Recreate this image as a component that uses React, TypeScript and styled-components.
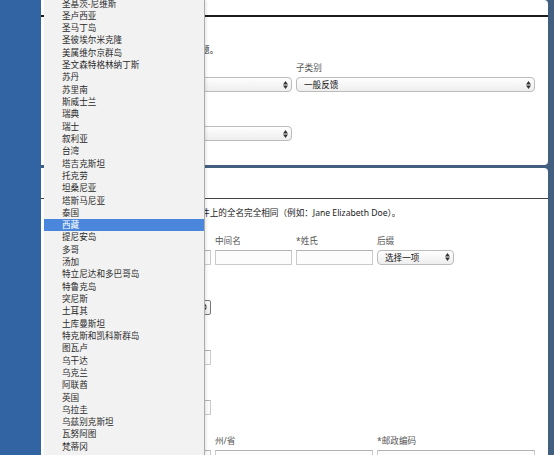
import React from 'react';
import styled, { createGlobalStyle } from 'styled-components';

const GlobalStyle = createGlobalStyle`
  html, body {
    margin: 0;
    padding: 0;
  }
  body {
    font-family: "Noto Sans", "Noto Sans CJK SC", sans-serif;
    font-size: 8.6px;
    color: #222;
    background: #435f80;
  }
`;

// Page frame
const Page = styled.div`
  position: relative;
  display: flex;
  width: 554px;
  height: 455px;
  overflow: hidden;
  background: #435f80;
`;

const Sidebar = styled.div`
  width: 41px;
  flex-shrink: 0;
  background: #3263a3;
`;

const Main = styled.div`
  flex: 1;
  display: flex;
  flex-direction: column;
  gap: 3px;
  padding-right: 6px;
`;

const Panel = styled.section`
  flex-shrink: 0;
  background: #fff;
  border-radius: 0 4px 4px 0;
`;

const PanelHeader = styled.header<{ $height: number; $rule: string }>`
  height: ${({ $height }) => $height}px;
  box-sizing: border-box;
  border-bottom: ${({ $rule }) => $rule};
`;

const PanelBody = styled.div<{ $top: number; $bottom: number }>`
  padding: ${({ $top }) => $top}px 11px ${({ $bottom }) => $bottom}px 12px;
`;

const Intro = styled.p<{ $gap: number }>`
  margin: 0 0 ${({ $gap }) => $gap}px;
  padding-left: 2px;
  line-height: 12.3px;
  white-space: nowrap;
`;

// Form
const FormRows = styled.div<{ $gap: number }>`
  display: flex;
  flex-direction: column;
  gap: ${({ $gap }) => $gap}px;
`;

const FormRow = styled.div`
  display: grid;
  grid-template-columns: repeat(6, 77px);
  column-gap: 4px;
`;

const Field = styled.div<{ $span: number }>`
  grid-column: span ${({ $span }) => $span};
  display: flex;
  flex-direction: column;
`;

const Label = styled.label`
  height: 12px;
  line-height: 12px;
  margin-bottom: 3px;
  color: #555;
  white-space: nowrap;
`;

const TextInput = styled.div`
  height: 15px;
  box-sizing: border-box;
  border: 1px solid #cacaca;
  border-top-color: #b3b3b3;
  background: #fcfcfc;
`;

const SelectBox = styled.div<{ $focused?: boolean }>`
  height: 15px;
  box-sizing: border-box;
  display: flex;
  align-items: center;
  padding: 0 3px 0 7px;
  border: 1px solid ${({ $focused }) => ($focused ? '#777' : '#bcbcbc')};
  border-radius: ${({ $focused }) => ($focused ? '2px' : '4px')};
  background: linear-gradient(#fefefe, #eeeeee);
  color: #111;
`;

const SelectValue = styled.span`
  flex: 1;
  white-space: nowrap;
  overflow: hidden;
`;

// Open country list
const Dropdown = styled.div`
  position: absolute;
  left: 44px;
  top: 0;
  width: 161px;
  height: 455px;
  box-sizing: border-box;
  background: #f2f2f2;
  border-right: 1px solid #acacac;
  box-shadow: 1px 0 3px rgba(0, 0, 0, 0.12);
  overflow: hidden;
`;

const OptionList = styled.ul`
  list-style: none;
  margin: -2.5px 0 0;
  padding: 0;
`;

const Option = styled.li<{ $selected?: boolean }>`
  height: 12.32px;
  line-height: 12.32px;
  padding-left: 18px;
  white-space: nowrap;
  color: ${({ $selected }) => ($selected ? '#fff' : '#2a2a2a')};
  background: ${({ $selected }) => ($selected ? '#4a86dc' : 'transparent')};
`;

const countries = [
  '圣基茨-尼维斯', '圣卢西亚', '圣马丁岛', '圣彼埃尔米克隆', '美属维尔京群岛',
  '圣文森特格林纳丁斯', '苏丹', '苏里南', '斯威士兰', '瑞典', '瑞士', '叙利亚',
  '台湾', '塔吉克斯坦', '托克劳', '坦桑尼亚', '塔斯马尼亚', '泰国', '西藏',
  '提尼安岛', '多哥', '汤加', '特立尼达和多巴哥岛', '特鲁克岛', '突尼斯', '土耳其',
  '土库曼斯坦', '特克斯和凯科斯群岛', '图瓦卢', '乌干达', '乌克兰', '阿联酋',
  '英国', '乌拉圭', '乌兹别克斯坦', '瓦努阿图', '梵蒂冈',
];

const Arrows = () => (
  <svg width="5" height="8" viewBox="0 0 5 8">
    <polygon points="0,3.4 2.5,0 5,3.4" fill="#333" />
    <polygon points="0,4.6 2.5,8 5,4.6" fill="#333" />
  </svg>
);

const Select: React.FC<{ value?: string; focused?: boolean }> = ({ value = '', focused }) => (
  <SelectBox $focused={focused}>
    <SelectValue>{value}</SelectValue>
    <Arrows />
  </SelectBox>
);

// Fields whose labels sit under the open list keep an empty label row
const App: React.FC = () => {
  return (
    <>
      <GlobalStyle />
      <Page>
        <Sidebar />
        <Main>
          <Panel>
            <PanelHeader $height={17} $rule="2px solid #1c1c1c" />
            <PanelBody $top={27} $bottom={24}>
              <Intro $gap={6}>请选择最能准确描述您要咨询的相关问题。</Intro>
              <FormRows $gap={19}>
                <FormRow>
                  <Field $span={3}>
                    <Label />
                    <Select />
                  </Field>
                  <Field $span={3}>
                    <Label>子类别</Label>
                    <Select value="一般反馈" />
                  </Field>
                </FormRow>
                <FormRow>
                  <Field $span={3}>
                    <Label />
                    <Select />
                  </Field>
                </FormRow>
              </FormRows>
            </PanelBody>
          </Panel>

          <Panel>
            <PanelHeader $height={31} $rule="1px solid #444" />
            <PanelBody $top={8} $bottom={20}>
              <Intro $gap={15.4}>
                请确保您输入的姓名与您的政府签发证件上的全名完全相同（例如：Jane Elizabeth Doe）。
              </Intro>
              <FormRows $gap={20}>
                <FormRow>
                  <Field $span={1}>
                    <Label />
                    <Select />
                  </Field>
                  <Field $span={1}>
                    <Label />
                    <TextInput />
                  </Field>
                  <Field $span={1}>
                    <Label>中间名</Label>
                    <TextInput />
                  </Field>
                  <Field $span={1}>
                    <Label>*姓氏</Label>
                    <TextInput />
                  </Field>
                  <Field $span={1}>
                    <Label>后缀</Label>
                    <Select value="选择一项" />
                  </Field>
                </FormRow>
                <FormRow>
                  <Field $span={2}>
                    <Label />
                    <Select focused />
                  </Field>
                </FormRow>
                <FormRow>
                  <Field $span={2}>
                    <Label />
                    <TextInput />
                  </Field>
                </FormRow>
                <FormRow>
                  <Field $span={2}>
                    <Label />
                    <TextInput />
                  </Field>
                </FormRow>
                <FormRow>
                  <Field $span={2}>
                    <Label />
                    <TextInput />
                  </Field>
                  <Field $span={2}>
                    <Label>州/省</Label>
                    <TextInput />
                  </Field>
                  <Field $span={2}>
                    <Label>*邮政编码</Label>
                    <TextInput />
                  </Field>
                </FormRow>
              </FormRows>
            </PanelBody>
          </Panel>
        </Main>

        <Dropdown>
          <OptionList>
            {countries.map((name) => (
              <Option key={name} $selected={name === '西藏'}>
                {name}
              </Option>
            ))}
          </OptionList>
        </Dropdown>
      </Page>
    </>
  );
};

export default App;
